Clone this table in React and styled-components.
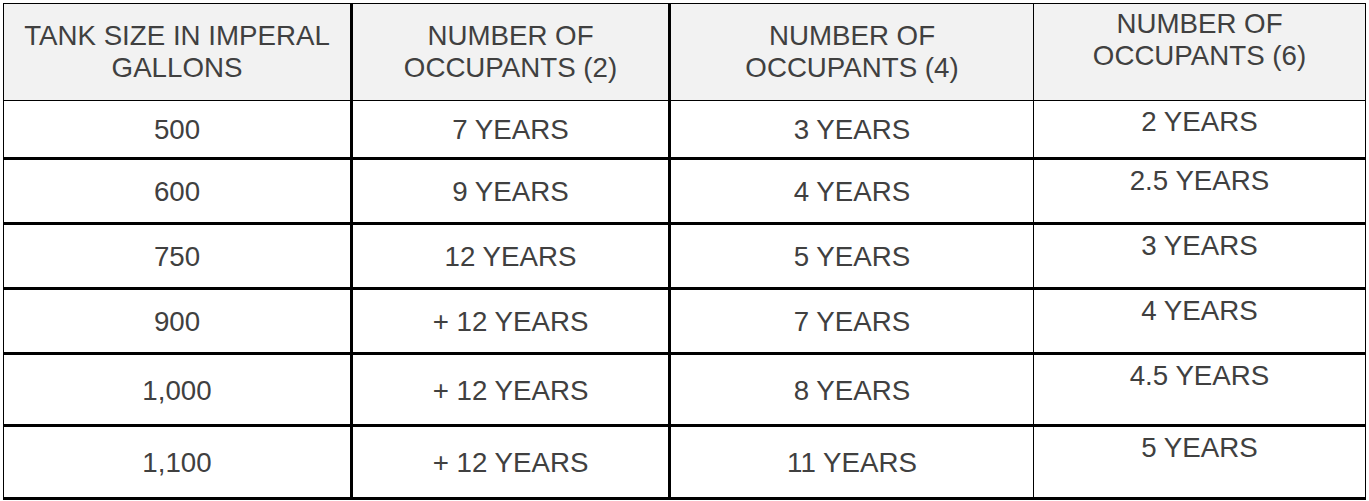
import React from 'react';
import styled, { createGlobalStyle, css } from 'styled-components';

const GlobalStyle = createGlobalStyle`
  * { box-sizing: border-box; }
  html, body {
    margin: 0;
    padding: 0;
    background: #fff;
  }
  body {
    font-family: "Liberation Sans", Arial, sans-serif;
    color: #404040;
  }
`;

const columns = [
  { title: ['TANK SIZE IN IMPERAL', 'GALLONS'], width: 350, edge: 'thick' },
  { title: ['NUMBER OF', 'OCCUPANTS (2)'], width: 318, edge: 'thick' },
  { title: ['NUMBER OF', 'OCCUPANTS (4)'], width: 363, edge: 'thin' },
  { title: ['NUMBER OF', 'OCCUPANTS (6)'], width: 332, edge: 'thin', top: true },
];

const rows = [
  { height: 59, cells: ['500', '7 YEARS', '3 YEARS', '2 YEARS'] },
  { height: 65, cells: ['600', '9 YEARS', '4 YEARS', '2.5 YEARS'] },
  { height: 65, cells: ['750', '12 YEARS', '5 YEARS', '3 YEARS'] },
  { height: 65, cells: ['900', '+ 12 YEARS', '7 YEARS', '4 YEARS'] },
  { height: 72, cells: ['1,000', '+ 12 YEARS', '8 YEARS', '4.5 YEARS'] },
  { height: 73, cells: ['1,100', '+ 12 YEARS', '11 YEARS', '5 YEARS'] },
];

const App = function () {
  return (
    <>
      <GlobalStyle />
      <Page>
        <Table>
          <colgroup>
            {columns.map((col, i) => (
              <col key={i} style={{ width: col.width }} />
            ))}
          </colgroup>
          <thead>
            <tr>
              {columns.map((col, i) => (
                <HeadCell key={i} $first={i === 0} $edge={col.edge} $top={col.top}>
                  {col.title[0]}
                  <br />
                  {col.title[1]}
                </HeadCell>
              ))}
            </tr>
          </thead>
          <tbody>
            {rows.map((row, r) => (
              <tr key={r}>
                {row.cells.map((text, i) => (
                  <Cell
                    key={i}
                    $height={row.height}
                    $first={i === 0}
                    $edge={columns[i].edge}
                    $top={columns[i].top}
                  >
                    {text}
                  </Cell>
                ))}
              </tr>
            ))}
          </tbody>
        </Table>
      </Page>
    </>
  );
};

export default App;

/* Styled Components */

const Page = styled.div`
  padding: 3px 0 0 3px;
`;

const Table = styled.table`
  border-collapse: separate;
  border-spacing: 0;
  table-layout: fixed;
  width: 1363px;
  font-size: 27.7px;
`;

const cellEdges = css`
  border-right: ${p => (p.$edge === 'thick' ? '3px' : '1px')} solid #000;
  border-left: ${p => (p.$first ? '1px solid #000' : 'none')};
`;

const HeadCell = styled.th`
  ${cellEdges}
  height: 98px;
  padding: ${p => (p.$top ? '4px 0 0' : '0')};
  border-top: 1px solid #000;
  border-bottom: 1px solid #000;
  background: #f2f2f2;
  font-weight: 400;
  line-height: 32px;
  text-align: center;
  vertical-align: ${p => (p.$top ? 'top' : 'middle')};
`;

const Cell = styled.td`
  ${cellEdges}
  height: ${p => p.$height}px;
  padding: ${p => (p.$top ? '5px 0 0' : '2px 0 0')};
  border-bottom: 3px solid #000;
  background: #fff;
  line-height: 32px;
  text-align: center;
  vertical-align: ${p => (p.$top ? 'top' : 'middle')};
`;
